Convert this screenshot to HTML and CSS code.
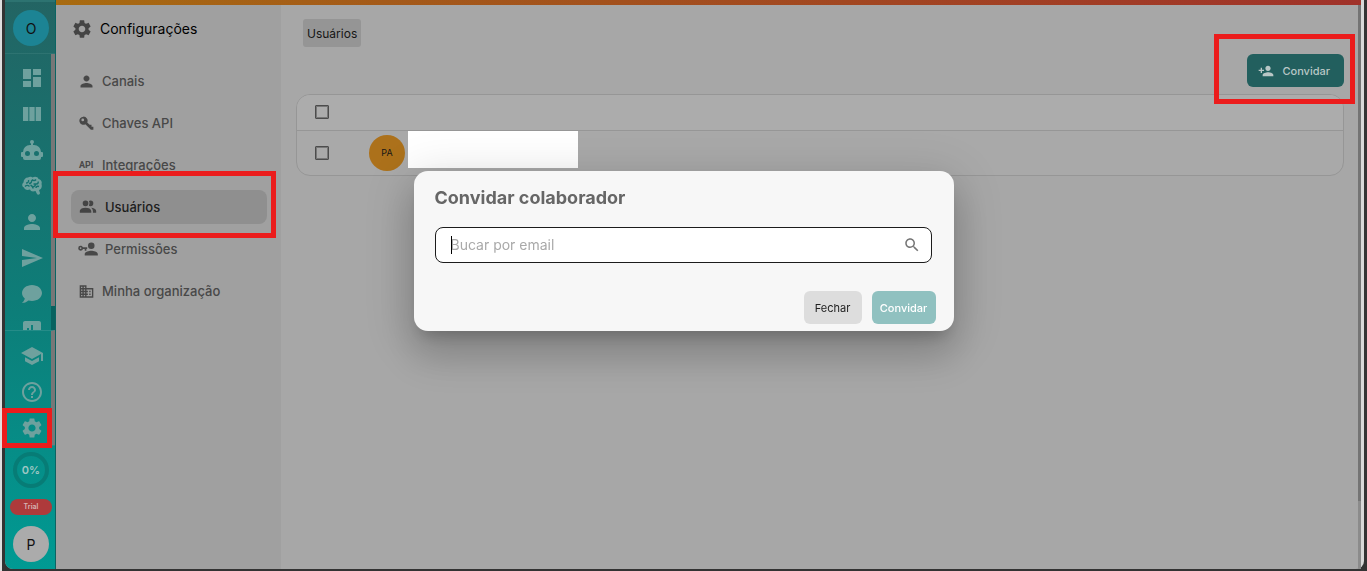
FILE: index.html
```html
<!DOCTYPE html>
<html lang="pt-BR">
<head>
    <meta charset="UTF-8">
    <meta name="viewport" content="width=device-width, initial-scale=1">
    <title>Configurações - Usuários</title>
    <link rel="stylesheet" href="styles.css">
</head>
<body>
    <div class="window">
        <!-- barra lateral -->
        <aside class="rail">
            <div class="rail-org"><button class="circle org" aria-label="Organização">O</button></div>
            <nav class="rail-list rail-main">
                <a href="#" aria-label="Painel"><svg viewBox="0 0 24 24"><path d="M3 13h8V3H3v10zm0 8h8v-6H3v6zm10 0h8V11h-8v10zm0-18v6h8V3h-8z"/></svg></a>
                <a href="#" aria-label="Colunas"><svg viewBox="0 0 24 24"><path d="M14.67 5v14H9.33V5h5.34zm1 14H21V5h-5.33v14zm-7.34 0V5H3v14h5.33z"/></svg></a>
                <a href="#" aria-label="Robôs"><svg viewBox="0 0 24 24"><path d="M12 2A2 2 0 0 1 14 4C14 4.74 13.6 5.39 13 5.73V7H14A7 7 0 0 1 21 14H22A1 1 0 0 1 23 15V18A1 1 0 0 1 22 19H21V20A2 2 0 0 1 19 22H5A2 2 0 0 1 3 20V19H2A1 1 0 0 1 1 18V15A1 1 0 0 1 2 14H3A7 7 0 0 1 10 7H11V5.73C10.4 5.39 10 4.74 10 4A2 2 0 0 1 12 2M7.5 13A2.5 2.5 0 0 0 5 15.5A2.5 2.5 0 0 0 7.5 18A2.5 2.5 0 0 0 10 15.5A2.5 2.5 0 0 0 7.5 13M16.5 13A2.5 2.5 0 0 0 14 15.5A2.5 2.5 0 0 0 16.5 18A2.5 2.5 0 0 0 19 15.5A2.5 2.5 0 0 0 16.5 13Z"/></svg></a>
                <a href="#" aria-label="Inteligência"><svg viewBox="0 0 24 24"><path d="M8 3.500C10 2 12 3 12.500 3.500C15 2 18 3 18.500 5C21 5.500 22.500 8 21.500 10C22.500 13 21 15.500 19 16L20 19C20 21 17.500 21 17 20L15.500 17C13 18 10.500 17.500 10 15.500C7 16.500 4.500 15.500 4 13.500C1.500 12.500 2 9.500 3.500 8.500C3.500 5.500 5.500 3.500 8 3.500Z"/><path class="folds" d="M6 9C8 9 9 7.500 8.500 6M5 12.500C6.500 11 8 11 9.500 12.500M9 9.500C11 9.500 12 8 11.500 6M12 5.500C13 7 15 7 16 5.500M13 14.500C13 12.500 11.500 11.500 10.500 11M13.500 10H16.500C18 10 18.500 8.500 18 7.500M16 14C16 12.500 17.500 12 19 12.500M15.500 10C15.500 11.500 14.500 12.500 13 13"/></svg></a>
                <a href="#" aria-label="Contatos"><svg viewBox="0 0 24 24"><path d="M12 12c2.210 0 4-1.790 4-4s-1.790-4-4-4-4 1.790-4 4 1.790 4 4 4zm0 2c-2.670 0-8 1.340-8 4v2h16v-2c0-2.660-5.330-4-8-4z"/></svg></a>
                <a href="#" aria-label="Envios"><svg viewBox="0 0 24 24"><path d="M2.010 21L23 12 2.010 3 2 10l15 2-15 2z"/></svg></a>
                <a href="#" aria-label="Conversas"><svg viewBox="0 0 24 24"><path d="M12 3C17.500 3 22 6.580 22 11C22 15.420 17.500 19 12 19C10.760 19 9.570 18.820 8.470 18.500C5.550 21 2 21 2 21C4.330 18.670 4.700 17.100 4.750 16.500C3.050 15.070 2 13.130 2 11C2 6.580 6.500 3 12 3Z"/></svg></a>
                <a href="#" aria-label="Relatórios"><svg viewBox="0 0 24 24"><path d="M19 3H5c-1.100 0-2 .9-2 2v14c0 1.100.9 2 2 2h14c1.100 0 2-.9 2-2V5c0-1.100-.9-2-2-2zM9 17H7v-7h2v7zm4 0h-2V7h2v10zm4 0h-2v-4h2v4z"/></svg></a>
            </nav>
            <nav class="rail-list rail-extra">
                <a href="#" aria-label="Academia"><svg viewBox="0 0 24 24"><path d="M5 13.180v4L12 21l7-3.820v-4L12 17l-7-3.820zM12 3L1 9l11 6 9-4.910V17h2V9L12 3z"/></svg></a>
                <a href="#" aria-label="Ajuda"><svg viewBox="0 0 24 24"><path d="M11 18h2v-2h-2v2zm1-16C6.480 2 2 6.480 2 12s4.480 10 10 10 10-4.480 10-10S17.520 2 12 2zm0 18c-4.410 0-8-3.590-8-8s3.590-8 8-8 8 3.590 8 8-3.590 8-8 8zm0-14c-2.210 0-4 1.790-4 4h2c0-1.100.9-2 2-2s2 .9 2 2c0 2-3 1.750-3 5h2c0-2.250 3-2.500 3-5 0-2.210-1.790-4-4-4z"/></svg></a>
                <a href="#" class="marked" aria-label="Configurações"><svg viewBox="0 0 24 24"><path d="M19.140 12.940c.04-.3.06-.61.06-.94 0-.32-.02-.64-.07-.94l2.030-1.580c.18-.14.23-.41.12-.61l-1.920-3.320c-.12-.22-.37-.29-.59-.22l-2.390.96c-.5-.38-1.030-.7-1.620-.94l-.36-2.540c-.04-.24-.24-.41-.48-.41h-3.840c-.24 0-.43.17-.47.41l-.36 2.540c-.59.24-1.130.57-1.620.94l-2.390-.96c-.22-.08-.47 0-.59.22L2.740 8.870c-.12.21-.08.47.12.61l2.030 1.580c-.05.3-.09.63-.09.94s.02.64.07.94l-2.030 1.580c-.18.14-.23.41-.12.61l1.920 3.320c.12.22.37.29.59.22l2.390-.96c.5.38 1.030.7 1.620.94l.36 2.540c.05.24.24.41.48.41h3.840c.24 0 .44-.17.47-.41l.36-2.540c.59-.24 1.130-.56 1.620-.94l2.390.96c.22.08.47 0 .59-.22l1.920-3.320c.12-.22.07-.47-.12-.61l-2.010-1.580zM12 15.600c-1.980 0-3.600-1.620-3.600-3.600s1.620-3.600 3.600-3.600 3.600 1.620 3.600 3.600-1.620 3.600-3.600 3.600z"/></svg></a>
            </nav>
            <div class="rail-foot">
                <div class="circle progress">0%</div>
                <span class="trial">Trial</span>
                <button class="circle profile" aria-label="Perfil">P</button>
            </div>
        </aside>

        <div class="app">
            <div class="topline"></div>
            <div class="content">
                <!-- menu de configurações -->
                <section class="settings">
                    <h1><svg viewBox="0 0 24 24"><path d="M19.140 12.940c.04-.3.06-.61.06-.94 0-.32-.02-.64-.07-.94l2.030-1.580c.18-.14.23-.41.12-.61l-1.920-3.320c-.12-.22-.37-.29-.59-.22l-2.390.96c-.5-.38-1.030-.7-1.620-.94l-.36-2.540c-.04-.24-.24-.41-.48-.41h-3.840c-.24 0-.43.17-.47.41l-.36 2.540c-.59.24-1.130.57-1.620.94l-2.390-.96c-.22-.08-.47 0-.59.22L2.740 8.870c-.12.21-.08.47.12.61l2.030 1.580c-.05.3-.09.63-.09.94s.02.64.07.94l-2.030 1.580c-.18.14-.23.41-.12.61l1.920 3.320c.12.22.37.29.59.22l2.390-.96c.5.38 1.030.7 1.620.94l.36 2.540c.05.24.24.41.48.41h3.840c.24 0 .44-.17.47-.41l.36-2.540c.59-.24 1.130-.56 1.620-.94l2.390.96c.22.08.47 0 .59-.22l1.920-3.320c.12-.22.07-.47-.12-.61l-2.010-1.580zM12 15.600c-1.980 0-3.600-1.620-3.600-3.600s1.620-3.600 3.600-3.600 3.600 1.620 3.600 3.600-1.620 3.600-3.600 3.600z"/></svg>Configurações</h1>
                    <nav class="menu">
                        <a href="#"><svg viewBox="2 2 20 20"><path d="M12 12c2.210 0 4-1.790 4-4s-1.790-4-4-4-4 1.790-4 4 1.790 4 4 4zm0 2c-2.670 0-8 1.340-8 4v2h16v-2c0-2.660-5.330-4-8-4z"/></svg>Canais</a>
                        <a href="#"><svg viewBox="0 0 24 24"><path fill-rule="evenodd" d="M7 1a6.500 6.500 0 1 0 3.200 12.200L19 22h4v-5h-3v-3h-3l-3.800-3.800A6.500 6.500 0 0 0 7 1zM6 4a2.200 2.200 0 1 1 0 4.400A2.200 2.200 0 0 1 6 4z"/></svg>Chaves API</a>
                        <a href="#"><span class="api">API</span>Integrações</a>
                        <a href="#" class="active marked"><svg class="wide" viewBox="1 1 22 22"><path d="M16 17V19H2V17S2 13 9 13 16 17 16 17M12.500 7.500A3.500 3.500 0 1 0 9 11A3.500 3.500 0 0 0 12.500 7.500M15.940 13A5.320 5.320 0 0 1 18 17V19H22V17S22 13.370 15.940 13M15 4A3.390 3.390 0 0 0 13.070 4.590A5 5 0 0 1 13.070 10.410A3.390 3.390 0 0 0 15 11A3.500 3.500 0 0 0 15 4Z"/></svg>Usuários</a>
                        <a href="#"><svg class="wide" viewBox="1 1 22 22"><path d="M11 10V12H10V14H8V12H5.830C5.420 13.170 4.310 14 3 14A3 3 0 0 1 0 11A3 3 0 0 1 3 8C4.310 8 5.420 8.830 5.830 10H11M3 10A1 1 0 0 0 2 11A1 1 0 0 0 3 12A1 1 0 0 0 4 11A1 1 0 0 0 3 10M16 14C18.670 14 24 15.340 24 18V20H8V18C8 15.340 13.330 14 16 14M16 12A4 4 0 0 1 12 8A4 4 0 0 1 16 4A4 4 0 0 1 20 8A4 4 0 0 1 16 12Z"/></svg>Permissões</a>
                        <a href="#"><svg viewBox="1 1 22 22"><path d="M12 7V3H2v18h20V7H12zM6 19H4v-2h2v2zm0-4H4v-2h2v2zm0-4H4V9h2v2zm0-4H4V5h2v2zm4 12H8v-2h2v2zm0-4H8v-2h2v2zm0-4H8V9h2v2zm0-4H8V5h2v2zm10 12h-8v-2h2v-2h-2v-2h2v-2h-2V9h8v10zm-2-8h-2v2h2v-2zm0 4h-2v2h2v-2z"/></svg>Minha organização</a>
                    </nav>
                </section>

                <!-- lista de usuários -->
                <main class="users">
                    <button class="tab">Usuários</button>
                    <div class="toolbar">
                        <span class="marked invite-mark">
                            <button class="invite"><svg viewBox="0 0 24 24"><path d="M15 12c2.210 0 4-1.790 4-4s-1.790-4-4-4-4 1.790-4 4 1.790 4 4 4zm-9-2V7H4v3H1v2h3v3h2v-3h3v-2H6zm9 4c-2.670 0-8 1.340-8 4v2h16v-2c0-2.660-5.330-4-8-4z"/></svg>Convidar</button>
                        </span>
                    </div>
                    <div class="table-box">
                        <table>
                            <thead>
                                <tr>
                                    <th class="check"><input type="checkbox" aria-label="Selecionar todos"></th>
                                    <th></th>
                                </tr>
                            </thead>
                            <tbody>
                                <tr>
                                    <td class="check"><input type="checkbox" aria-label="Selecionar usuário"></td>
                                    <td><div class="user"><span class="avatar">PA</span><span class="hidden-name"></span></div></td>
                                </tr>
                            </tbody>
                        </table>
                    </div>
                </main>
                <div class="scrollbar"></div>
            </div>
        </div>
    </div>

    <!-- modal de convite -->
    <div class="overlay">
        <form class="modal" role="dialog" aria-labelledby="modal-title">
            <h2 id="modal-title">Convidar colaborador</h2>
            <div class="search">
                <span class="caret"></span>
                <input type="text" placeholder="Bucar por email" aria-label="Bucar por email">
                <svg viewBox="0 0 24 24"><path d="M15.500 14h-.79l-.28-.27C15.410 12.590 16 11.110 16 9.500 16 5.910 13.090 3 9.500 3S3 5.910 3 9.500 5.910 16 9.500 16c1.610 0 3.090-.59 4.230-1.570l.27.28v.79l5 4.990L20.490 19l-4.990-5zm-6 0C7.010 14 5 11.990 5 9.500S7.010 5 9.500 5 14 7.010 14 9.500 11.990 14 9.500 14z"/></svg>
            </div>
            <div class="actions">
                <button type="button" class="close">Fechar</button>
                <button type="button" class="send">Convidar</button>
            </div>
        </form>
    </div>
</body>
</html>
```
FILE: styles.css
```css
* {
    box-sizing: border-box;
}

body {
    margin: 0;
    height: 100vh;
    padding: 0 3px 2px;
    border-left: 2px solid #dedede;
    background: #333;
    font-family: Inter, "Liberation Sans", sans-serif;
    font-size: 13px;
    color: #161616;
    overflow: hidden;
}

button, input {
    font: inherit;
}

button {
    border: 0;
    padding: 0;
}

a {
    color: inherit;
    text-decoration: none;
}

svg {
    display: block;
    flex: none;
    fill: currentColor;
}

.window {
    display: flex;
    height: 100%;
    border-right: 3px solid #d8d8d8;
    border-radius: 0 0 8px 8px;
    background: #a7a7a7;
}

/* caixa vermelha de destaque */
.marked {
    position: relative;
}

.marked::after {
    content: "";
    position: absolute;
    border: 5px solid #eb1c1c;
    pointer-events: none;
}

/* barra lateral */
.rail {
    display: flex;
    flex-direction: column;
    flex: none;
    width: 51px;
    border-right: 1px solid #0b6462;
    border-radius: 0 0 0 8px;
    background: linear-gradient(#236463, #0d7e79 55%, #009a93);
}

.rail-org {
    height: 54px;
    padding: 8px 8px 0;
    border-top: 2px solid #2d7371;
    border-bottom: 1px solid #2d7371;
}

.circle {
    display: flex;
    align-items: center;
    justify-content: center;
    width: 36px;
    height: 36px;
    border-radius: 50%;
    font-size: 14px;
    color: #111;
}

.rail-org .org {
    background: #1c8494;
}

.rail-list {
    display: flex;
    flex-direction: column;
    align-items: center;
    gap: 12px;
    padding-left: 7px;
    color: #6ea19e;
    border-right: 4px solid #777;
}

.rail-list svg {
    width: 24px;
    height: 24px;
}

.rail-list .folds {
    fill: none;
    stroke: #14726f;
    stroke-width: 1.4;
}

.rail-main {
    flex: 1;
    min-height: 0;
    padding-top: 12px;
    border-image: linear-gradient(#777 91%, #07625f 91%) 1;
    overflow: hidden;
}

.rail-extra {
    flex: none;
    height: 115px;
    padding-top: 13px;
    border-top: 1px solid #258c88;
}

.rail-extra .marked::after {
    inset: -8px -8px -8px -18px;
}

.rail-foot {
    display: flex;
    flex-direction: column;
    align-items: center;
    gap: 11px;
    height: 124px;
    padding: 6px 0 0 2px;
    border-top: 1px solid #258c88;
}

.progress {
    border: 4px solid #077c76;
    font-size: 11px;
    font-weight: 600;
    color: #9fc7c4;
}

.trial {
    width: 42px;
    border-radius: 8px;
    background: #ae3a3b;
    color: #d5b5b4;
    font-size: 7px;
    font-weight: 600;
    line-height: 16px;
    text-align: center;
}

.profile {
    background: #ababab;
}

.app {
    display: flex;
    flex-direction: column;
    flex: 1;
    min-width: 0;
}

.topline {
    flex: none;
    height: 5px;
    background: linear-gradient(90deg, #a86b10, #a45a19 25%, #a0322a);
}

.content {
    display: flex;
    flex: 1;
}

/* menu de configurações */
.settings {
    flex: none;
    width: 225px;
    padding: 13px 14px 0 15px;
    background: #a0a0a0;
}

.settings h1 {
    display: flex;
    align-items: center;
    gap: 7px;
    margin: 0 0 24px;
    font-size: 14px;
    font-weight: 400;
    line-height: 20px;
    color: #000;
}

.settings h1 svg {
    width: 22px;
    height: 22px;
    color: #444;
}

.menu {
    display: flex;
    flex-direction: column;
    gap: 8px;
}

.menu a {
    display: flex;
    align-items: center;
    gap: 8px;
    height: 34px;
    padding-left: 8px;
    border-radius: 8px;
    font-weight: 500;
    color: #484848;
}

.menu svg {
    width: 15px;
    height: 15px;
}

.menu .wide {
    width: 18px;
    height: 18px;
    overflow: visible;
}

.menu .api {
    width: 15px;
    font-family: Roboto, sans-serif;
    font-size: 9px;
    font-weight: 700;
}

.menu .active {
    background: #8f8f8f;
    color: #1d1d1d;
}

.menu .active svg {
    color: #444;
}

.menu .marked::after {
    inset: -19px -9px -14px -18px;
}

/* lista de usuários */
.users {
    flex: 1;
    min-width: 0;
    padding: 14px 14px 0 15px;
}

.tab {
    display: block;
    height: 28px;
    margin-left: 7px;
    padding: 0 4px;
    border-radius: 3px;
    background: #959595;
    color: #161616;
    font-size: 12px;
}

.toolbar {
    display: flex;
    justify-content: flex-end;
    padding: 7px 0;
}

.invite-mark::after {
    inset: -20px -11px -17px -33px;
}

.invite {
    display: flex;
    align-items: center;
    gap: 8px;
    height: 33px;
    padding: 0 14px 0 11px;
    border-radius: 6px;
    background: #225f5e;
    color: #b9c7c6;
    font-size: 11px;
    font-weight: 500;
}

.invite svg {
    width: 16px;
    height: 16px;
}

.table-box {
    border: 1px solid #969696;
    border-radius: 14px;
    background: #a9a9a9;
    overflow: hidden;
}

table {
    width: 100%;
    border-collapse: collapse;
}

th, td {
    padding: 0;
    text-align: left;
}

th {
    height: 35px;
    border-bottom: 1px solid #969696;
    background: #acacac;
}

td {
    height: 45px;
}

.check {
    width: 72px;
    padding-left: 18px;
}

.check input {
    display: block;
    appearance: none;
    width: 14px;
    height: 14px;
    margin: 0;
    border: 1px solid #4c4c4c;
    border-radius: 1px;
    outline: 1px solid #777;
    outline-offset: -2px;
}

.user {
    display: flex;
    align-items: center;
    gap: 3px;
}

.avatar {
    width: 36px;
    border-radius: 50%;
    background: #ac711b;
    font-size: 9px;
    line-height: 36px;
    text-align: center;
}

.hidden-name {
    width: 170px;
    height: 37px;
    margin-bottom: 7px;
    background: #fff;
}

.scrollbar {
    flex: none;
    width: 3px;
    background: linear-gradient(#747474 88%, #8b8b8b 88%);
}

/* modal de convite */
.overlay {
    position: fixed;
    inset: 0;
    z-index: 2;
    display: flex;
    align-items: flex-start;
    justify-content: center;
    padding-top: 171px;
}

.modal {
    width: 540px;
    max-width: 90%;
    padding: 15px 18px 7px 21px;
    border-radius: 14px;
    background: #f7f7f7;
    box-shadow: 0 11px 15px -7px rgba(0, 0, 0, .2), 0 24px 38px 3px rgba(0, 0, 0, .14), 0 9px 46px 8px rgba(0, 0, 0, .12);
}

.modal h2 {
    margin: 0 0 17px;
    font-size: 18px;
    font-weight: 700;
    line-height: 24px;
    color: #666;
}

.search {
    position: relative;
    display: flex;
    align-items: center;
    height: 36px;
    margin-right: 4px;
    padding: 0 10px 0 15px;
    border: 1px solid #1c1c1c;
    border-radius: 8px;
    background: #fff;
}

.search input {
    flex: 1;
    min-width: 0;
    padding: 0 0 2px;
    border: 0;
    outline: 0;
    background: none;
    font-size: 14px;
}

.search input::placeholder {
    color: #a9a9a9;
}

.search svg {
    width: 18px;
    height: 18px;
    color: #757575;
}

.search .caret {
    position: absolute;
    left: 15px;
    width: 1px;
    height: 18px;
    background: #000;
}

.actions {
    display: flex;
    justify-content: flex-end;
    gap: 10px;
    margin-top: 28px;
}

.actions button {
    height: 33px;
    border-radius: 6px;
    font-size: 11px;
}

.actions .close {
    width: 58px;
    background: #ddd;
    color: #222;
}

.actions .send {
    width: 64px;
    background: #90c1c0;
    color: #fff;
    font-weight: 500;
}
```
